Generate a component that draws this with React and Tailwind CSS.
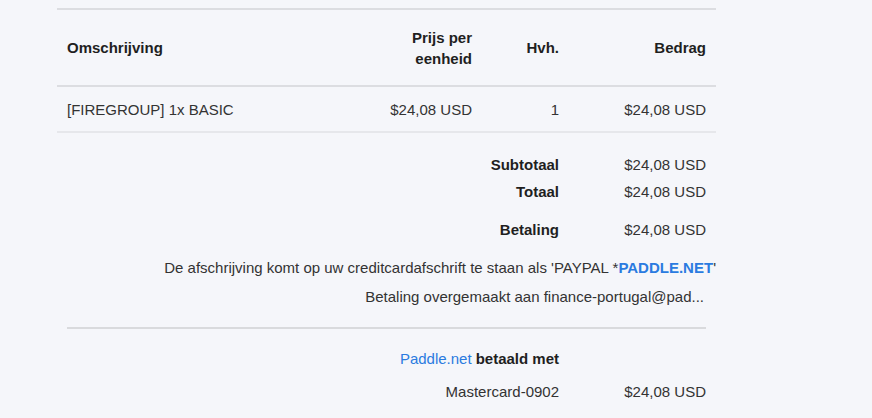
const cols = 'grid grid-cols-[315px_110px_87px_147px]';

const SummaryRow = ({ label, value, className = '', bold = true }) => (
  <div className={`${cols} ${className}`}>
    <div />
    <div />
    <div
      className={`flex justify-end whitespace-nowrap px-[10px] ${bold ? 'font-bold text-[#1f1f1f]' : 'text-[#333]'}`}
    >
      {label}
    </div>
    <div className="px-[10px] text-right text-[#333]">{value}</div>
  </div>
);

export default function App() {
  return (
    <div
      className="min-h-[418px] w-[872px] bg-[#f5f6fa] pt-[8px] text-[15px] leading-[21px] text-[#333]"
      style={{ fontFamily: '"Liberation Sans", Arial, sans-serif' }}
    >
      <div className="ml-[57px] w-[659px]">
        <div className="h-[2px] bg-[#dcdde1]" />

        <div className={`${cols} items-center h-[75px]`}>
          <div className="px-[10px] font-bold text-[#1f1f1f]">Omschrijving</div>
          <div className="px-[10px] text-right font-bold text-[#1f1f1f]">
            Prijs per
            <br />
            eenheid
          </div>
          <div className="px-[10px] text-right font-bold text-[#1f1f1f]">Hvh.</div>
          <div className="px-[10px] text-right font-bold text-[#1f1f1f]">Bedrag</div>
        </div>

        <div className="h-[2px] bg-[#dcdde1]" />

        <div className={`${cols} items-center h-[44px]`}>
          <div className="px-[10px]">[FIREGROUP] 1x BASIC</div>
          <div className="px-[10px] text-right">$24,08 USD</div>
          <div className="px-[10px] text-right">1</div>
          <div className="px-[10px] text-right">$24,08 USD</div>
        </div>

        <div className="h-[2px] bg-[#e6e7eb]" />

        <SummaryRow label="Subtotaal" value="$24,08 USD" className="mt-[21px]" />
        <SummaryRow label="Totaal" value="$24,08 USD" className="mt-[6px]" />
        <SummaryRow label="Betaling" value="$24,08 USD" className="mt-[17px]" />

        <div className="mt-[17px] flex justify-end whitespace-nowrap">
          De afschrijving komt op uw creditcardafschrift te staan als 'PAYPAL *
          <span className="font-bold text-[#2a7be0]">PADDLE.NET</span>'
        </div>
        <div className="mt-[8px] flex justify-end pr-[12px]">
          Betaling overgemaakt aan finance-portugal@pad...
        </div>

        <div className="mx-[10px] mt-[20px] h-[2px] bg-[#d9dadd]" />

        <div className={`${cols} mt-[19px]`}>
          <div />
          <div />
          <div className="flex justify-end whitespace-nowrap px-[10px] font-bold text-[#1f1f1f]">
            <span className="mr-[4px] font-normal text-[#2a7be0]">Paddle.net</span>betaald met
          </div>
          <div />
        </div>
        <SummaryRow label="Mastercard-0902" value="$24,08 USD" className="mt-[12px]" bold={false} />
      </div>
    </div>
  );
}
